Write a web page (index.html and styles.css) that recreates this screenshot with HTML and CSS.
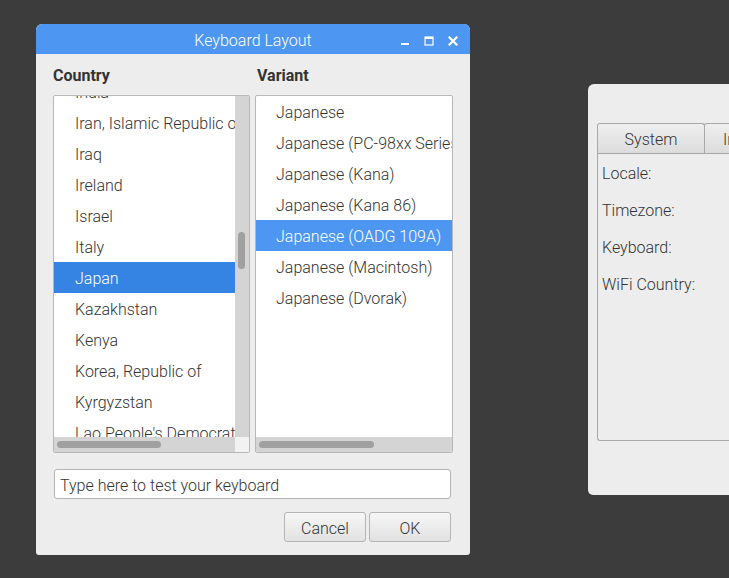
FILE: index.html
```html
<!DOCTYPE html>
<html>
<head>
<meta charset="utf-8">
<link rel="stylesheet" href="styles.css">
</head>
<body>
<div class="desktop">
  <div class="win config">
    <div class="tabs">
      <div class="tab tab-system">System</div>
      <div class="tab tab-other">Interfaces</div>
    </div>
    <div class="panel">
      <div class="plabel">Locale:</div>
      <div class="plabel">Timezone:</div>
      <div class="plabel">Keyboard:</div>
      <div class="plabel">WiFi Country:</div>
    </div>
  </div>

  <div class="win dialog">
    <div class="titlebar">
      <span class="title">Keyboard Layout</span>
      <div class="controls">
        <svg width="10" height="10" viewBox="0 0 10 10"><rect x="1" y="7" width="8" height="2" fill="#fff"/></svg>
        <svg width="10" height="10" viewBox="0 0 10 10"><rect x="1" y="1" width="8" height="8" fill="none" stroke="#fff" stroke-width="1.2"/><rect x="1" y="1" width="8" height="2" fill="#fff"/></svg>
        <svg width="10" height="10" viewBox="0 0 10 10"><path d="M1.5 1.5 L8.5 8.5 M8.5 1.5 L1.5 8.5" stroke="#fff" stroke-width="2.2" stroke-linecap="square"/></svg>
      </div>
    </div>
    <div class="body">
      <div class="cols">
        <div class="col">
          <div class="colhead">Country</div>
          <div class="list">
            <div class="list-main">
              <div class="viewport">
                <div class="rows rows-country">
                  <div class="row">India</div>
                  <div class="row">Iran, Islamic Republic of</div>
                  <div class="row">Iraq</div>
                  <div class="row">Ireland</div>
                  <div class="row">Israel</div>
                  <div class="row">Italy</div>
                  <div class="row sel-country">Japan</div>
                  <div class="row">Kazakhstan</div>
                  <div class="row">Kenya</div>
                  <div class="row">Korea, Republic of</div>
                  <div class="row">Kyrgyzstan</div>
                  <div class="row">Lao People's Democratic Republic</div>
                </div>
              </div>
              <div class="vscroll"><div class="vthumb"></div></div>
            </div>
            <div class="list-foot">
              <div class="hscroll"><div class="hthumb hthumb-country"></div></div>
              <div class="corner"></div>
            </div>
          </div>
        </div>
        <div class="col">
          <div class="colhead colhead-variant">Variant</div>
          <div class="list">
            <div class="list-main">
              <div class="viewport">
                <div class="rows rows-variant">
                  <div class="row">Japanese</div>
                  <div class="row">Japanese (PC-98xx Series)</div>
                  <div class="row">Japanese (Kana)</div>
                  <div class="row">Japanese (Kana 86)</div>
                  <div class="row sel-variant">Japanese (OADG 109A)</div>
                  <div class="row">Japanese (Macintosh)</div>
                  <div class="row">Japanese (Dvorak)</div>
                </div>
              </div>
            </div>
            <div class="list-foot">
              <div class="hscroll"><div class="hthumb hthumb-variant"></div></div>
            </div>
          </div>
        </div>
      </div>
      <div class="entry">Type here to test your keyboard</div>
      <div class="buttons">
        <button class="btn">Cancel</button>
        <button class="btn">OK</button>
      </div>
    </div>
  </div>
</div>
</body>
</html>
```
FILE: styles.css
```css
* { box-sizing: border-box; }
html, body {
  margin: 0;
  padding: 0;
  width: 729px;
  height: 578px;
  overflow: hidden;
  background: #3c3c3c;
  font-family: Roboto, "Liberation Sans", sans-serif;
  font-weight: 300;
  font-size: 16px;
  color: #333;
}
.desktop {
  position: relative;
  width: 729px;
  height: 578px;
}
.win {
  position: absolute;
  background: #ededed;
}
.dialog {
  left: 36px;
  top: 24px;
  width: 434px;
  height: 531px;
  border-radius: 6px 6px 3px 3px;
  overflow: hidden;
  display: flex;
  flex-direction: column;
}
.titlebar {
  position: relative;
  height: 30px;
  background: #4d97f2;
  color: #fff;
  display: flex;
  align-items: center;
  justify-content: center;
  flex: none;
}
.title {
  font-size: 16px;
  font-weight: 300;
  padding-top: 3px;
}
.controls {
  position: absolute;
  right: 12px;
  top: 12px;
  display: flex;
  gap: 14px;
}
.controls svg { display: block; }
.body {
  padding: 12px 17px 13px 17px;
  display: flex;
  flex-direction: column;
}
.cols {
  display: grid;
  grid-template-columns: 197px 198px;
  column-gap: 5px;
}
.colhead {
  font-weight: 700;
  font-size: 16px;
  line-height: 20px;
  height: 20px;
  margin-bottom: 9px;
  color: #333;
}
.colhead-variant { padding-left: 2px; }
.list {
  height: 358px;
  border: 1px solid #b8b8b8;
  border-radius: 2px;
  background: #fff;
  display: flex;
  flex-direction: column;
  overflow: hidden;
}
.list-main {
  flex: 1;
  display: flex;
  min-height: 0;
}
.viewport {
  flex: 1;
  overflow: hidden;
  min-width: 0;
}
.rows-country { margin-top: -20px; }
.row {
  height: 31px;
  line-height: 29px;
  padding-top: 2px;
  padding-left: 21px;
  white-space: nowrap;
  overflow: hidden;
  color: #333;
}
.rows-variant .row { padding-left: 20px; }
.sel-country { background: #3584e4; color: #fff; }
.sel-variant { background: #4d97f2; color: #fff; }
.vscroll {
  width: 14px;
  background: #d4d4d4;
  position: relative;
  flex: none;
}
.vthumb {
  position: absolute;
  left: 3px;
  top: 136px;
  width: 7px;
  height: 37px;
  border-radius: 4px;
  background: #a0a0a0;
}
.list-foot {
  height: 15px;
  display: flex;
  flex: none;
}
.hscroll {
  flex: 1;
  background: #d4d4d4;
  padding: 4px 0 0 3px;
}
.hthumb {
  height: 7px;
  border-radius: 4px;
  background: #a0a0a0;
}
.hthumb-country { width: 104px; }
.hthumb-variant { width: 115px; }
.corner {
  width: 14px;
  background: #f2f2f2;
}
.entry {
  margin: 16px 2px 0 1px;
  height: 30px;
  border: 1px solid #b4b4b4;
  border-radius: 3px;
  background: #fff;
  line-height: 28px;
  padding-top: 2px;
  padding-left: 5px;
  color: #333;
}
.buttons {
  display: flex;
  justify-content: flex-end;
  gap: 3px;
  margin-top: 13px;
  margin-right: 2px;
}
.btn {
  width: 82px;
  height: 30px;
  border: 1px solid #b4b4b4;
  border-radius: 3px;
  background: linear-gradient(#f6f6f6, #e2e2e2);
  font-family: Roboto, "Liberation Sans", sans-serif;
  font-weight: 300;
  font-size: 16px;
  color: #333;
  padding: 2px 0 0 0;
}
.config {
  left: 588px;
  top: 84px;
  width: 200px;
  height: 411px;
  border-radius: 6px 0 0 5px;
  padding: 39px 0 0 9px;
}
.tabs {
  display: flex;
  height: 30px;
}
.tab {
  flex: none;
  height: 30px;
  line-height: 30px;
  padding-top: 1px;
  border: 1px solid #a8a8a8;
  border-bottom: none;
  border-radius: 3px 3px 0 0;
  background: linear-gradient(#efefef, #dcdcdc);
  text-align: center;
  color: #333;
}
.tab-system { width: 108px; }
.tab-other { width: 90px; margin-left: -1px; padding-left: 18px; text-align: left; }
.panel {
  height: 288px;
  border: 1px solid #a8a8a8;
  border-right: none;
  border-radius: 0 0 0 3px;
  padding: 10px 0 0 4px;
}
.plabel {
  height: 37px;
  line-height: 20px;
  color: #333;
}
```
